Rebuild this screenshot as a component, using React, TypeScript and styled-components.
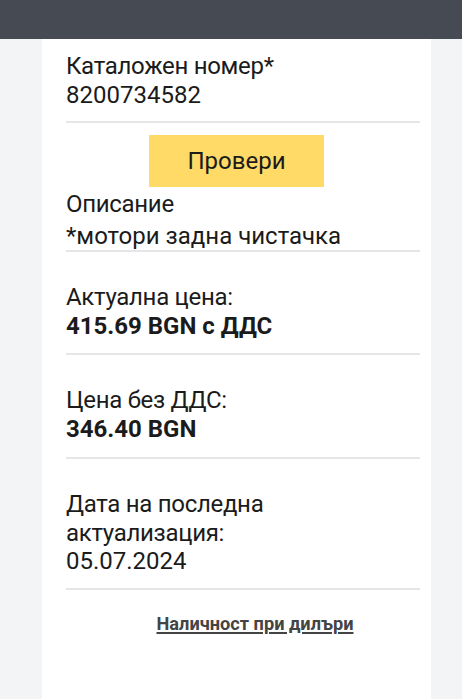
import React from "react";
import styled, { createGlobalStyle } from "styled-components";

const Global = createGlobalStyle`
  html, body {
    margin: 0;
    padding: 0;
    background: #f2f4f6;
    font-family: Roboto, "Noto Sans", Arial, sans-serif;
    color: #1b1b1b;
  }
`;

const Page = styled.div`
  min-height: 699px;
  display: flex;
  flex-direction: column;
`;

const TopBar = styled.header`
  height: 39px;
  background: #464a53;
`;

const Card = styled.main`
  flex: 1;
  margin: 0 31px 0 42px;
  background: #ffffff;
  padding: 0 11px 0 24px;
  display: flex;
  flex-direction: column;
`;

const Field = styled.section<{ $top: number; $bottom: number }>`
  padding: ${(p) => p.$top}px 0 ${(p) => p.$bottom}px;
  border-bottom: 2px solid #e5e6e8;
  font-size: 24px;
  line-height: 28.5px;
`;

const Label = styled.div`
  font-weight: 400;
  letter-spacing: -0.3px;
`;

const Value = styled.div<{ $bold?: boolean; $gap?: number }>`
  margin-top: ${(p) => p.$gap ?? 0}px;
  font-weight: ${(p) => (p.$bold ? 700 : 400)};
`;

const ButtonRow = styled.div`
  display: flex;
  justify-content: center;
  padding: 12px 13px 0 0;
`;

const CheckButton = styled.button`
  width: 175px;
  height: 52px;
  padding: 0;
  border: none;
  background: #ffda66;
  font-family: inherit;
  font-size: 24px;
  color: #1b1b1b;
  cursor: pointer;
`;

const LinkRow = styled.div`
  display: flex;
  justify-content: center;
  padding: 23px 0 0 24px;
  line-height: 21px;
`;

const DealerLink = styled.a`
  font-size: 18.2px;
  font-weight: 700;
  color: #444444;
  text-decoration: underline;
  text-decoration-thickness: 2px;
  text-underline-offset: 2px;
  cursor: pointer;
`;

export default function App() {
  return (
    <>
      <Global />
      <Page>
        <TopBar />
        <Card>
          <Field $top={13} $bottom={12}>
            <Label>Каталожен номер*</Label>
            <Value>8200734582</Value>
          </Field>
          <ButtonRow>
            <CheckButton>Провери</CheckButton>
          </ButtonRow>
          <Field $top={3} $bottom={0}>
            <Label>Описание</Label>
            <Value $gap={3}>*мотори задна чистачка</Value>
          </Field>
          <Field $top={31} $bottom={13}>
            <Label>Актуална цена:</Label>
            <Value $bold>415.69 BGN с ДДС</Value>
          </Field>
          <Field $top={31} $bottom={14}>
            <Label>Цена без ДДС:</Label>
            <Value $bold>346.40 BGN</Value>
          </Field>
          <Field $top={31} $bottom={12}>
            <Label>Дата на последна актуализация:</Label>
            <Value>05.07.2024</Value>
          </Field>
          <LinkRow>
            <DealerLink>Наличност при дилъри</DealerLink>
          </LinkRow>
        </Card>
      </Page>
    </>
  );
}
